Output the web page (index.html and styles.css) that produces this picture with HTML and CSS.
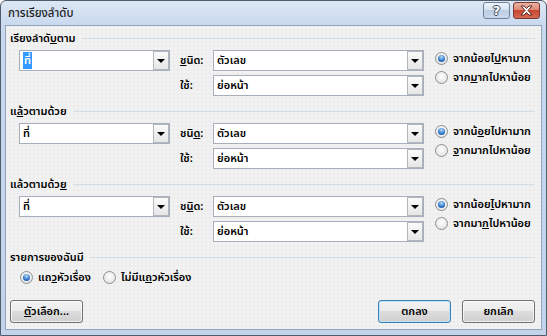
FILE: index.html
```html
<!DOCTYPE html>
<html lang="th">
<head>
    <meta charset="UTF-8">
    <title>การเรียงลำดับ</title>
    <link rel="stylesheet" href="styles.css">
</head>
<body>
<div class="window">
    <div class="titlebar">
        <span class="title">การเรียงลำดับ</span>
        <div class="caption">
            <span class="cap help">?</span>
            <span class="cap close">
                <svg width="15" height="11" viewBox="0 0 15 11">
                    <path d="M2 1h3l2.5 2.5L10 1h3l-4 4.5 4 4.5h-3L7.5 7.5 5 10H2l4-4.5z" fill="#fff" stroke="#5a2a22" stroke-width="1"/>
                </svg>
            </span>
        </div>
    </div>

    <div class="client">
        <!-- เรียงลำดับตาม -->
        <div class="group">
            <div class="group-head"><span>เรียงลำดั<u>บ</u>ตาม</span></div>
            <div class="sort-row">
                <div class="combo"><span class="val sel">ที่</span><span class="drop"></span></div>
                <span class="lbl"><u>ช</u>นิด:</span>
                <div class="combo"><span class="val">ตัวเลข</span><span class="drop"></span></div>
                <div class="radios">
                    <label class="radio"><span class="rb on"></span><span>จากน้อยไ<u>ป</u>หามาก</span></label>
                    <label class="radio"><span class="rb"></span><span>จาก<u>ม</u>ากไปหาน้อย</span></label>
                </div>
                <span class="lbl second">ใช้:</span>
                <div class="combo"><span class="val">ย่อหน้า</span><span class="drop"></span></div>
            </div>
        </div>

        <!-- แล้วตามด้วย -->
        <div class="group">
            <div class="group-head"><span>แ<u>ล้</u>วตามด้วย</span></div>
            <div class="sort-row">
                <div class="combo"><span class="val">ที่</span><span class="drop"></span></div>
                <span class="lbl">ชนิ<u>ด</u>:</span>
                <div class="combo"><span class="val">ตัวเลข</span><span class="drop"></span></div>
                <div class="radios">
                    <label class="radio"><span class="rb on"></span><span>จากน้<u>อ</u>ยไปหามาก</span></label>
                    <label class="radio"><span class="rb"></span><span><u>จ</u>ากมากไปหาน้อย</span></label>
                </div>
                <span class="lbl second">ใช้:</span>
                <div class="combo"><span class="val">ย่อหน้า</span><span class="drop"></span></div>
            </div>
        </div>

        <!-- แล้วตามด้วย -->
        <div class="group">
            <div class="group-head"><span>แล้วตามด้ว<u>ย</u></span></div>
            <div class="sort-row">
                <div class="combo"><span class="val">ที่</span><span class="drop"></span></div>
                <span class="lbl">ช<u>นิ</u>ด:</span>
                <div class="combo"><span class="val">ตัวเลข</span><span class="drop"></span></div>
                <div class="radios">
                    <label class="radio"><span class="rb on"></span><span>จากน้อย<u>ไ</u>ปหามาก</span></label>
                    <label class="radio"><span class="rb"></span><span>จากมา<u>ก</u>ไปหาน้อย</span></label>
                </div>
                <span class="lbl second">ใช้:</span>
                <div class="combo"><span class="val">ย่อหน้า</span><span class="drop"></span></div>
            </div>
        </div>

        <!-- รายการของฉันมี -->
        <div class="group">
            <div class="group-head"><span>รายการของฉันมี</span></div>
            <div class="list-opts">
                <label class="radio"><span class="rb on"></span><span>แถ<u>ว</u>หัวเรื่อง</span></label>
                <label class="radio"><span class="rb"></span><span>ไม่มีแ<u>ถ</u>วหัวเรื่อง</span></label>
            </div>
        </div>

        <div class="actions">
            <button class="btn"><u>ตั</u>วเลือก...</button>
            <button class="btn default">ตกลง</button>
            <button class="btn">ยกเลิก</button>
        </div>
    </div>
</div>
</body>
</html>
```

FILE: styles.css
```css
* {
    margin: 0;
    padding: 0;
    box-sizing: border-box;
}
body {
    font-family: Tahoma, "Noto Sans Thai", "Leelawadee UI", sans-serif;
    font-size: 11px;
    font-weight: 600;
    color: #000;
    background: #fff;
}
u {
    text-decoration: underline;
}

/* window frame */
.window {
    width: 547px;
    height: 336px;
    border: 1px solid #4e5d6e;
    border-radius: 6px 6px 0 0;
    background: linear-gradient(#dde7f4, #c8d8ed 26px, #c2d3ea);
    padding: 0 4px 5px 4px;
    display: flex;
    flex-direction: column;
}
.titlebar {
    height: 24px;
    display: flex;
    align-items: center;
    padding-left: 3px;
}
.title {
    color: #1e1e1e;
    font-weight: 500;
    font-size: 11.5px;
}
.caption {
    margin-left: auto;
    margin-right: 2px;
    align-self: flex-start;
    margin-top: 1px;
    display: flex;
    gap: 3px;
}
.cap {
    width: 27px;
    height: 17px;
    border-radius: 3px;
    display: flex;
    align-items: center;
    justify-content: center;
}
.help {
    border: 1px solid #6e819b;
    background: linear-gradient(#eef3fa, #d5e1f0 50%, #bccde4 50%, #c9d8eb);
    color: #fff;
    font-family: "DejaVu Sans", sans-serif;
    font-weight: bold;
    font-size: 13px;
    text-shadow: 1px 0 #3b4a5c, -1px 0 #3b4a5c, 0 1px #3b4a5c, 0 -1px #3b4a5c;
}
.close {
    border: 1px solid #7a3a30;
    background: linear-gradient(#eab1a3, #dc8570 50%, #c7472f 50%, #d46a55);
}

/* client area */
.client {
    flex: 1;
    border: 1px solid #93a5bc;
    background-color: #eeeeee;
    background-image: radial-gradient(#fbfbfb 0.6px, transparent 0.8px);
    background-size: 4px 4px;
    padding: 5px 6px 6px 4px;
    display: flex;
    flex-direction: column;
}
.group + .group {
    margin-top: 8px;
}
.group-head {
    height: 14px;
    display: flex;
    align-items: center;
    gap: 6px;
}
.group-head::after {
    content: "";
    flex: 1;
    border-top: 1px solid #d3dde6;
}

.sort-row {
    margin: 5px 0 0 9px;
    display: grid;
    grid-template-columns: 151px 43px 211px auto;
    grid-template-rows: 21px 21px;
    row-gap: 4px;
}
.lbl {
    padding-left: 10px;
    align-self: center;
}
.lbl.second {
    grid-column-start: 2;
}
.combo {
    display: flex;
    align-items: center;
    background: #fff;
    border: 1px solid #a7afba;
    padding-left: 3px;
}
.val.sel {
    background: #3399ff;
    color: #fff;
    padding: 0 1px;
}
.drop {
    margin-left: auto;
    width: 16px;
    height: 100%;
    border: 1px solid #b3b7bd;
    background: linear-gradient(#fafafa, #e6e6e6);
    display: flex;
    align-items: center;
    justify-content: center;
}
.drop::before {
    content: "";
    border-left: 4px solid transparent;
    border-right: 4px solid transparent;
    border-top: 4px solid #000;
    margin-top: 1px;
}

.radios {
    grid-column: 4;
    grid-row: 1 / span 2;
    margin-left: 11px;
    display: flex;
    flex-direction: column;
    gap: 3px;
}
.radio {
    height: 16px;
    display: flex;
    align-items: center;
    gap: 5px;
    white-space: nowrap;
}
.rb {
    width: 13px;
    height: 13px;
    border-radius: 50%;
    border: 1px solid #8e8f8f;
    background: radial-gradient(circle at 50% 40%, #ffffff, #dcdcdc);
    position: relative;
    flex: none;
}
.rb.on::after {
    content: "";
    position: absolute;
    top: 2px;
    left: 2px;
    right: 2px;
    bottom: 2px;
    border-radius: 50%;
    background: radial-gradient(circle at 50% 30%, #b6ddf7, #2f74c6 60%, #1a4f98);
}

.list-opts {
    margin: 5px 0 0 10px;
    display: flex;
    gap: 12px;
}

/* buttons */
.actions {
    margin-top: auto;
    display: flex;
    gap: 11px;
}
.btn {
    width: 73px;
    height: 23px;
    font: inherit;
    color: #000;
    border: 1px solid #707070;
    border-radius: 3px;
    background: linear-gradient(#f2f2f2, #ebebeb 50%, #dddddd 50%, #cfcfcf);
    box-shadow: inset 0 0 0 1px rgba(255,255,255,.7);
}
.btn:first-child {
    margin-right: auto;
}
.btn.default {
    border-color: #3c7fb1;
    box-shadow: inset 0 0 0 1px #bde6fd;
}
```
